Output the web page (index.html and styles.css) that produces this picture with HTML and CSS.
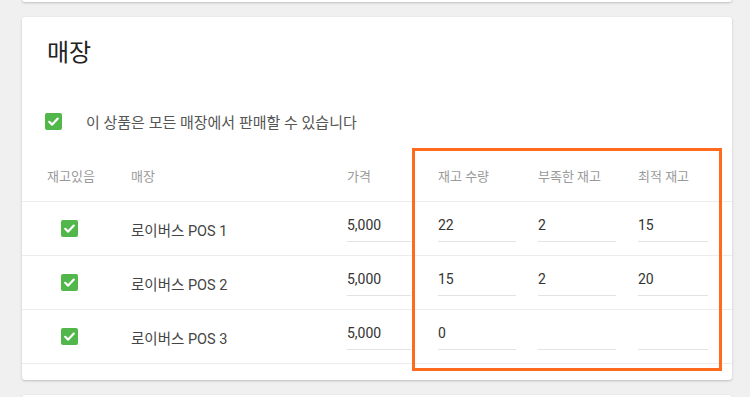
FILE: index.html
```html
<!DOCTYPE html>
<html lang="ko">
<head>
<meta charset="utf-8">
<link rel="stylesheet" href="styles.css">
</head>
<body>
<div class="card card-prev"></div>
<section class="card stores">
  <h2 class="title">매장</h2>
  <label class="all">
    <span class="cb"><svg viewBox="0 0 17 17"><path d="M4.2 8.8 L7.2 11.6 L12.8 5.6" /></svg></span>
    <span class="all-text">이 상품은 모든 매장에서 판매할 수 있습니다</span>
  </label>
  <div class="table">
    <div class="row head">
      <div>재고있음</div><div>매장</div><div>가격</div><div>재고 수량</div><div>부족한 재고</div><div>최적 재고</div>
    </div>
    <div class="row">
      <div><span class="cb cb-row"><svg viewBox="0 0 17 17"><path d="M4.2 8.8 L7.2 11.6 L12.8 5.6" /></svg></span></div>
      <div class="name">로이버스 POS 1</div>
      <div><span class="inp w-price">5,000</span></div>
      <div><span class="inp w-a">22</span></div>
      <div><span class="inp w-a">2</span></div>
      <div><span class="inp w-b">15</span></div>
    </div>
    <div class="row">
      <div><span class="cb cb-row"><svg viewBox="0 0 17 17"><path d="M4.2 8.8 L7.2 11.6 L12.8 5.6" /></svg></span></div>
      <div class="name">로이버스 POS 2</div>
      <div><span class="inp w-price">5,000</span></div>
      <div><span class="inp w-a">15</span></div>
      <div><span class="inp w-a">2</span></div>
      <div><span class="inp w-b">20</span></div>
    </div>
    <div class="row">
      <div><span class="cb cb-row"><svg viewBox="0 0 17 17"><path d="M4.2 8.8 L7.2 11.6 L12.8 5.6" /></svg></span></div>
      <div class="name">로이버스 POS 3</div>
      <div><span class="inp w-price">5,000</span></div>
      <div><span class="inp w-a">0</span></div>
      <div><span class="inp w-a"></span></div>
      <div><span class="inp w-b"></span></div>
    </div>
  </div>
  <div class="highlight"></div>
</section>
<div class="card card-next"></div>
</body>
</html>
```

FILE: styles.css
```css
* { box-sizing: border-box; }
html, body { margin: 0; padding: 0; }
body {
  background: #f0f0f0;
  font-family: Roboto, "Noto Sans CJK KR", sans-serif;
  width: 750px;
  height: 397px;
  overflow: hidden;
}
.card {
  background: #fff;
  border-radius: 3px;
  box-shadow: 0 1px 3px rgba(0,0,0,0.16), 0 1px 1px rgba(0,0,0,0.05);
  margin-left: 22px;
  width: 710px;
}
.card-prev {
  height: 12px;
  margin-top: -10px;
}
.stores {
  position: relative;
  margin-top: 15px;
  height: 363px;
  padding: 20px 0 16px;
}
.card-next {
  margin-top: 15px;
  height: 20px;
}
.title {
  margin: 0 0 0 25px;
  font-size: 24px;
  line-height: 32px;
  font-weight: 400;
  color: #222;
}
.all {
  display: flex;
  align-items: center;
  margin: 42px 0 0 23px;
  height: 20px;
}
.all-text {
  margin-left: 24px;
  font-size: 15px;
  color: #555;
  line-height: 20px;
  position: relative;
  top: 2px;
}
.cb {
  width: 17px;
  height: 17px;
  border-radius: 2px;
  background: #52b74a;
  display: inline-flex;
  flex: none;
}
.cb svg { width: 17px; height: 17px; }
.cb path {
  fill: none;
  stroke: #fff;
  stroke-width: 2.2;
  stroke-linecap: round;
  stroke-linejoin: round;
}
.table { margin-top: 17px; }
.row {
  display: grid;
  grid-template-columns: 84px 216px 91px 100px 100px 1fr;
  align-items: center;
  height: 54px;
  padding-left: 25px;
  border-bottom: 1px solid #ededed;
  font-size: 14px;
  color: #444;
}
.head {
  font-size: 13px;
  color: #9a9a9a;
  padding-top: 2px;
}
.cb-row { margin-left: 14px; vertical-align: middle; display: flex; }
.name { color: #444; font-size: 14.5px; padding-top: 1px; }
.inp {
  display: block;
  height: 26px;
  line-height: 18px;
  border-bottom: 1px solid #e3e3e3;
  color: #333;
  font-size: 14px;
  padding-top: 0;
}
.w-price { width: 64px; }
.w-a { width: 78px; }
.w-b { width: 70px; }
.highlight {
  position: absolute;
  left: 390px;
  top: 131px;
  width: 310px;
  height: 223px;
  border: 3px solid #ff6b1e;
  pointer-events: none;
}
```
